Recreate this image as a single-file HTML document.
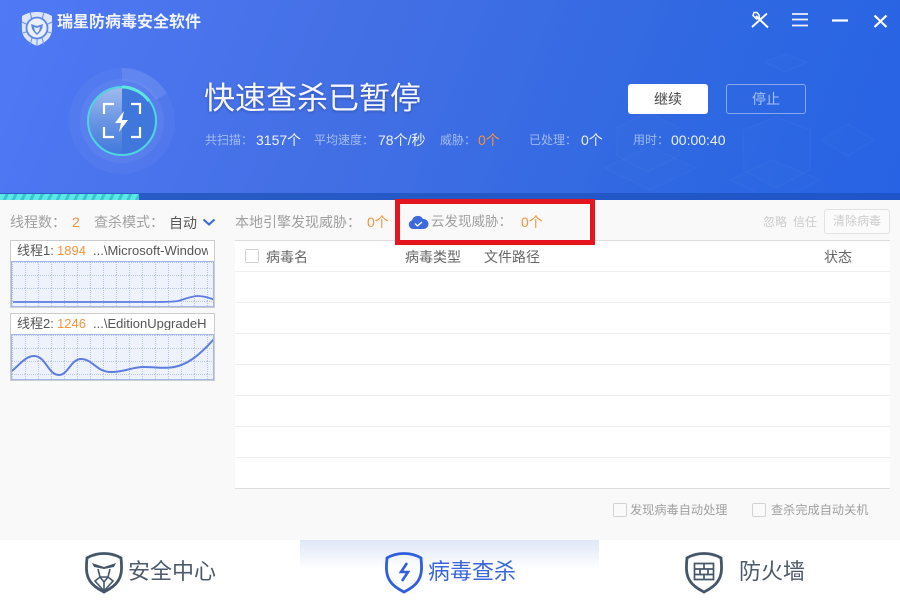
<!DOCTYPE html>
<html><head><meta charset="utf-8"><style>
*{box-sizing:border-box}
html,body{margin:0;padding:0}
body{width:900px;height:600px;overflow:hidden;position:relative;background:#f9f9f9;font-family:"Liberation Sans","Microsoft YaHei","Noto Sans CJK SC",sans-serif;font-size:13px;color:#a0a0a0}
.a{position:absolute;white-space:nowrap;line-height:1}
.o{color:#f5933b}
.hd{left:0;top:0;width:900px;height:194px;background:linear-gradient(112deg,#5079f6 0%,#436fe4 40%,#2f68e2 75%,#2763e4 100%);overflow:hidden}
.w{color:#fff}
.l{color:#b9cdf6}
.row{position:absolute;left:235px;width:655px;height:31px;background:#fff;border-bottom:1px solid #efefef}
.box{position:absolute;left:10px;width:205px;border:1px solid #ccc;background:#fff}
.chk{position:absolute;width:14px;height:14px;border:1px solid #d2d2d2;border-radius:2px;background:#fff}
.th{top:250px;color:#666;font-size:14px}
</style></head><body>
<div class="a hd">
<svg width="900" height="194" style="position:absolute;left:0;top:0" fill="none">
<defs><linearGradient id="lh" x1="0" y1="0" x2="0" y2="1"><stop offset="0" stop-color="#fff" stop-opacity=".5"/><stop offset=".55" stop-color="#fff" stop-opacity=".2"/><stop offset="1" stop-color="#fff" stop-opacity=".02"/></linearGradient></defs>
<g stroke="#fff" stroke-opacity=".035" fill="#fff" fill-opacity=".008">
<path d="M605 168l45-22 45 22-45 22z"/><path d="M730 180l42-20 48 20-44 22z"/><path d="M743 130l33-13 34 13v40l-34 18-33-18z"/><path d="M821 140l27-16 26 16-26 16z"/>
<path d="M617 128l30-16 32 16v28l-32 16-30-16z"/><path d="M765 62l20-8 22 8-22 10z"/>
</g>
<circle cx="122" cy="121" r="53" fill="#fff" fill-opacity=".04"/>
<circle cx="122" cy="121" r="42" fill="#fff" fill-opacity=".05"/>
<path d="M122 68a53 53 0 0 1 45 25l-11 7a40 40 0 0 0-34-19z" fill="#fff" fill-opacity=".09"/>
<circle cx="122" cy="121" r="34" fill="#3f77dc" stroke="#4fd6de" stroke-width="2"/>
<path d="M122 88a33 33 0 0 0 0 66z" fill="url(#lh)"/>
<path d="M122 87a34 34 0 0 1 27 14" stroke="#5fe8e0" stroke-width="3"/>
<g stroke="#fff" stroke-width="2.200">
<path d="M114 104h-10v10M131 104h9v10M114 137h-10v-10M131 137h9v-10"/>
</g>
<path d="M124 111l-9 12h6l-2 9 9-12h-6z" fill="#fff"/>
<!-- logo -->
<path d="M37 12c-5 0-10 1-15 4 0 11-1 17 3 22 3 4 8 6 12 8 4-2 9-4 12-8 4-5 3-11 3-22-5-3-10-4-15-4z" fill="#dde6fb"/>
<g stroke="#6f92ef" stroke-width="1.100">
<path d="M30 12l2 8M44 12l-2 8M22 22l6 3M52 22l-6 3M23 33l6-2M51 33l-6-2M30 45l2-7M44 45l-2-7M37 39v7"/>
</g>
<circle cx="37" cy="28" r="10.500" fill="#eaf0fd" stroke="#5f86ea" stroke-width="1.800"/>
<path d="M31 24l6 2 6-2-1 5-2 3-3 3-3-3-2-3z" fill="#5f86ea"/>
<path d="M34 27l3 1 3-1-1 4-2 2-2-2z" fill="#eaf0fd"/>
<!-- top icons -->
<g stroke="#fff" stroke-width="2" fill="none">
<path d="M756 16l12 11.500"/>
<path d="M754 12.500l-1 3 3.500 3.500 3-1 -.5-3-2-2.500z" stroke-width="1.500"/>
<path d="M767 13.500l-15 13.500" stroke-width="1.900"/>
<path d="M792 14h16M792 19.500h16M792 25.500h16" stroke-opacity=".92" stroke-width="1.800"/>
<path d="M832 20.500h16" stroke-width="2.200"/>
<path d="M874.500 15.500l12 11.500M886.500 15.500l-12 11.500" stroke-width="2.200"/>
</g>
</svg>
<div class="a w" style="left:57px;top:15px;font-size:16px;font-weight:bold;opacity:.92">瑞星防病毒安全软件</div>
<div class="a w" style="left:204px;top:83px;font-size:31px;text-shadow:0 1px 3px rgba(0,0,50,.3);opacity:.95">快速查杀已暂停</div>
<div class="a" style="left:628px;top:84px;width:80px;height:30px;background:#fff;border-radius:3px;color:#444;font-size:14px;line-height:30px;text-align:center">继续</div>
<div class="a" style="left:726px;top:84px;width:80px;height:30px;border:1px solid #88a8ee;border-radius:3px;color:#a9c0f5;font-size:14px;line-height:28px;text-align:center">停止</div>
<div class="a l" style="left:205px;top:134px;font-size:12px;opacity:.8">共扫描：</div><div class="a w" style="left:256px;top:133px;font-size:14px;opacity:.9">3157个</div>
<div class="a l" style="left:314px;top:134px;font-size:12px;opacity:.8">平均速度：</div><div class="a w" style="left:378px;top:133px;font-size:14px;opacity:.9">78个/秒</div>
<div class="a l" style="left:440px;top:134px;font-size:12px;opacity:.8">威胁：</div><div class="a o" style="left:478px;top:133px;font-size:14px">0个</div>
<div class="a l" style="left:529px;top:134px;font-size:12px;opacity:.8">已处理：</div><div class="a w" style="left:581px;top:133px;font-size:14px;opacity:.9">0个</div>
<div class="a l" style="left:633px;top:134px;font-size:12px;opacity:.8">用时：</div><div class="a w" style="left:671px;top:133px;font-size:14px;opacity:.9">00:00:40</div>
</div>
<div class="a" style="left:0;top:193px;width:900px;height:7px;background:linear-gradient(90deg,#2a5cc4,#1f55c8)"></div>
<div class="a" style="left:0;top:194px;width:139px;height:6px;background:repeating-linear-gradient(115deg,#5ce8e6 0 5px,#3fc3cf 5px 8px)"></div>

<div class="a" style="left:10px;top:215px;font-size:14px">线程数：</div><div class="a o" style="left:72px;top:215px;font-size:14px">2</div>
<div class="a" style="left:94px;top:215px;font-size:14px">查杀模式：</div><div class="a" style="left:169px;top:216px;color:#555;font-size:14px">自动</div>
<svg class="a" style="left:202px;top:218px" width="14" height="9" fill="none"><path d="M1.500 1.500l5.500 5 5.500-5" stroke="#3c67d8" stroke-width="2"/></svg>

<svg width="0" height="0" style="position:absolute"><defs><pattern id="g" width="13" height="13" patternUnits="userSpaceOnUse"><path d="M0 .5H13M.5 0V13" stroke="#b8c6ec" stroke-width="1" stroke-dasharray="1 1"/></pattern></defs></svg>
<div class="box" style="top:240px;height:68px">
<div class="a" style="left:6px;top:3px;font-size:13px;color:#555">线程1:</div>
<div class="a o" style="left:46px;top:3px;font-size:13px">1894</div>
<div class="a" style="left:82px;top:3px;font-size:13px;color:#555;width:115px;overflow:hidden">...\Microsoft-Windows</div>
<svg width="203" height="46" style="position:absolute;left:0;top:20px;background:#eef2fd;border:1px solid #a5b7e8" fill="none">
<rect width="203" height="46" fill="url(#g)"/>
<path d="M1 40H140c14 0 20 0 26-1 10-3 14-5 20-5s12 2 17 4" stroke="#5d7de0" stroke-width="1.800"/></svg>
</div>
<div class="box" style="top:313px;height:68px">
<div class="a" style="left:6px;top:3px;font-size:13px;color:#555">线程2:</div>
<div class="a o" style="left:46px;top:3px;font-size:13px">1246</div>
<div class="a" style="left:82px;top:3px;font-size:13px;color:#555;width:115px;overflow:hidden">...\EditionUpgradeH</div>
<svg width="203" height="46" style="position:absolute;left:0;top:20px;background:#eef2fd;border:1px solid #a5b7e8" fill="none">
<rect width="203" height="46" fill="url(#g)"/>
<path d="M0 36c8-7 14-15 22-15 12 0 14 19 25 19 9 0 12-16 22-16 12 0 15 13 30 13 15 0 20-5 33-5 13 0 19 2 30 0 12-2 24-10 40-28" stroke="#5d7de0" stroke-width="2"/></svg>
</div>

<div class="a" style="left:235px;top:215px;font-size:14px">本地引擎发现威胁：</div><div class="a o" style="left:367px;top:215px;font-size:14px">0个</div>
<svg class="a" style="left:408px;top:214px" width="21" height="16"><path d="M5 15a4.500 4.500 0 0 1-1-8.800A6 6 0 0 1 15 5a5 5 0 0 1 1 10z" fill="#3e68dd"/><path d="M7 9.500l2.500 2.500 4.500-4" stroke="#fff" stroke-width="1.300" fill="none"/></svg>
<div class="a" style="left:431px;top:215px;font-size:13.500px">云发现威胁：</div><div class="a o" style="left:521px;top:215px;font-size:14px">0个</div>

<div class="a" style="left:763px;top:216px;font-size:12px;color:#ccc">忽略</div>
<div class="a" style="left:793px;top:216px;font-size:12px;color:#ccc">信任</div>
<div class="a" style="left:824px;top:209px;width:66px;height:25px;border:1px solid #e2e2e2;border-radius:3px;background:#fbfbfb;color:#ccc;font-size:12px;line-height:23px;text-align:center">清除病毒</div>

<div class="a" style="left:235px;top:240px;width:655px;height:1px;background:#ddd"></div>
<div class="row" style="top:241px;height:31px"></div>
<div class="chk" style="left:245px;top:249px"></div>
<div class="a th" style="left:266px">病毒名</div>
<div class="a th" style="left:405px">病毒类型</div>
<div class="a th" style="left:484px">文件路径</div>
<div class="a th" style="left:824px">状态</div>
<div class="row" style="top:272px"></div><div class="row" style="top:303px"></div><div class="row" style="top:334px"></div><div class="row" style="top:365px"></div><div class="row" style="top:396px"></div><div class="row" style="top:427px"></div><div class="row" style="top:458px;border-bottom-color:#ddd"></div>

<div class="a" style="left:395px;top:199px;width:200px;height:46px;border:5px solid #e5151f"></div>

<div class="chk" style="left:613px;top:503px;background:#fafafa"></div>
<div class="a" style="left:630px;top:504px;font-size:12.200px">发现病毒自动处理</div>
<div class="chk" style="left:752px;top:503px;background:#fafafa"></div>
<div class="a" style="left:771px;top:504px;font-size:12.200px">查杀完成自动关机</div>

<div class="a" style="left:0;top:540px;width:900px;height:60px;background:#fff"></div>
<div class="a" style="left:300px;top:540px;width:299px;height:60px;background:linear-gradient(#dfe7f7,#fff 50%)"></div>
<svg class="a" style="left:0;top:540px" width="900" height="60" fill="none">
<defs><path id="sh" d="M0 13.500C-7 13.500-12 15-17 18-18 28-18 35-14 41-11 46-5 49.500 0 52 5 49.500 11 46 14 41 18 35 18 28 17 18 12 15 7 13.500 0 13.500z"/></defs>
<use href="#sh" x="104" stroke="#46566a" stroke-width="2.800"/>
<path d="M92 23l12 4v2l-10-2zM116 23l-12 4v2l10-2z" fill="#46566a"/>
<path d="M98 29l2 8-5 4 9 10 9-10-5-4 2-8M100 37h8M100 37l4 5 4-5M104 42v9" stroke="#46566a" stroke-width="1.600"/>
<use href="#sh" x="704" stroke="#46566a" stroke-width="2.800"/>
<path d="M694.500 23.500h19v16h-19zM694.500 29h19M694.500 34.500h19M704 23.500v5.500M700 29v5.500M708 29v5.500M704 34.500v5" stroke="#46566a" stroke-width="1.700"/>
<use href="#sh" x="404" stroke="#2f5fdc" stroke-width="2.800"/>
<path d="M407 23l-6 9h7l-6 9" stroke="#2f5fdc" stroke-width="2.600"/>
</svg>
<div class="a" style="left:128px;top:561px;font-size:22px;color:#4d5a6b">安全中心</div>
<div class="a" style="left:428px;top:561px;font-size:22px;color:#3a66dc">病毒查杀</div>
<div class="a" style="left:739px;top:561px;font-size:22px;color:#4d5a6b">防火墙</div>
</body></html>
